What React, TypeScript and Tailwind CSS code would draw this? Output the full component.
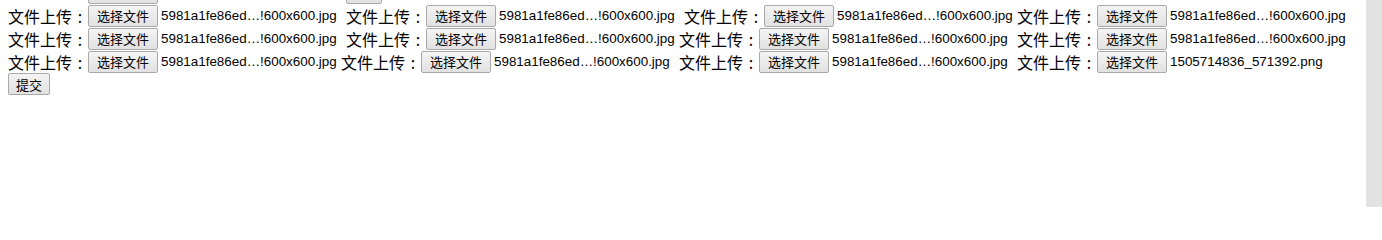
import React from "react";

const CJK = "font-['Microsoft_YaHei','Noto_Sans_CJK_SC',sans-serif]";

function Btn({ w, children }: { w: string; children?: React.ReactNode }) {
  return (
    <span
      className={`${w} h-[22px] shrink-0 flex items-center justify-center border border-[#a9a9a9] rounded-[2px] bg-linear-to-b from-[#f4f4f4] to-[#e1e1e1] text-[13px] leading-none text-black ${CJK}`}
    >
      {children}
    </span>
  );
}

function Cell({ w, file }: { w: string; file: string }) {
  return (
    <div className={`${w} shrink-0 flex items-center h-[23px]`}>
      <span className={`w-[80px] shrink-0 flex items-center text-[16px] leading-none text-black ${CJK}`}>
        <span>文件上传</span>
        <span className="w-[16px] flex justify-center">:</span>
      </span>
      <Btn w="w-[70px]">选择文件</Btn>
      <span className="ml-[3px] whitespace-nowrap text-[13.4px] leading-none text-black font-['Liberation_Sans',Arial,sans-serif]">
        {file}
      </span>
    </div>
  );
}

const F = "5981a1fe86ed…!600x600.jpg";

export default function App() {
  return (
    <div className="w-[1382px] h-[207px] flex bg-white overflow-hidden">
      <div className="flex-1 flex flex-col pl-[8px] -mt-[19px]">
        <div className="flex items-end h-[23px]">
          <div className="w-[80px] shrink-0" />
          <Btn w="w-[70px]"> </Btn>
          <div className="w-[188px] shrink-0" />
          <Btn w="w-[36px]"> </Btn>
        </div>
        <div className="flex">
          <Cell w="w-[338px]" file={F} />
          <Cell w="w-[338px]" file={F} />
          <Cell w="w-[333px]" file={F} />
          <Cell w="w-auto" file={F} />
        </div>
        <div className="flex">
          <Cell w="w-[338px]" file={F} />
          <Cell w="w-[333px]" file={F} />
          <Cell w="w-[338px]" file={F} />
          <Cell w="w-auto" file={F} />
        </div>
        <div className="flex">
          <Cell w="w-[333px]" file={F} />
          <Cell w="w-[338px]" file={F} />
          <Cell w="w-[338px]" file={F} />
          <Cell w="w-auto" file="1505714836_571392.png" />
        </div>
        <div className="flex h-[22px]">
          <Btn w="w-[42px]">提交</Btn>
        </div>
      </div>
      <div className="w-[16px] h-full bg-[#e2e2e2] shrink-0" />
    </div>
  );
}
